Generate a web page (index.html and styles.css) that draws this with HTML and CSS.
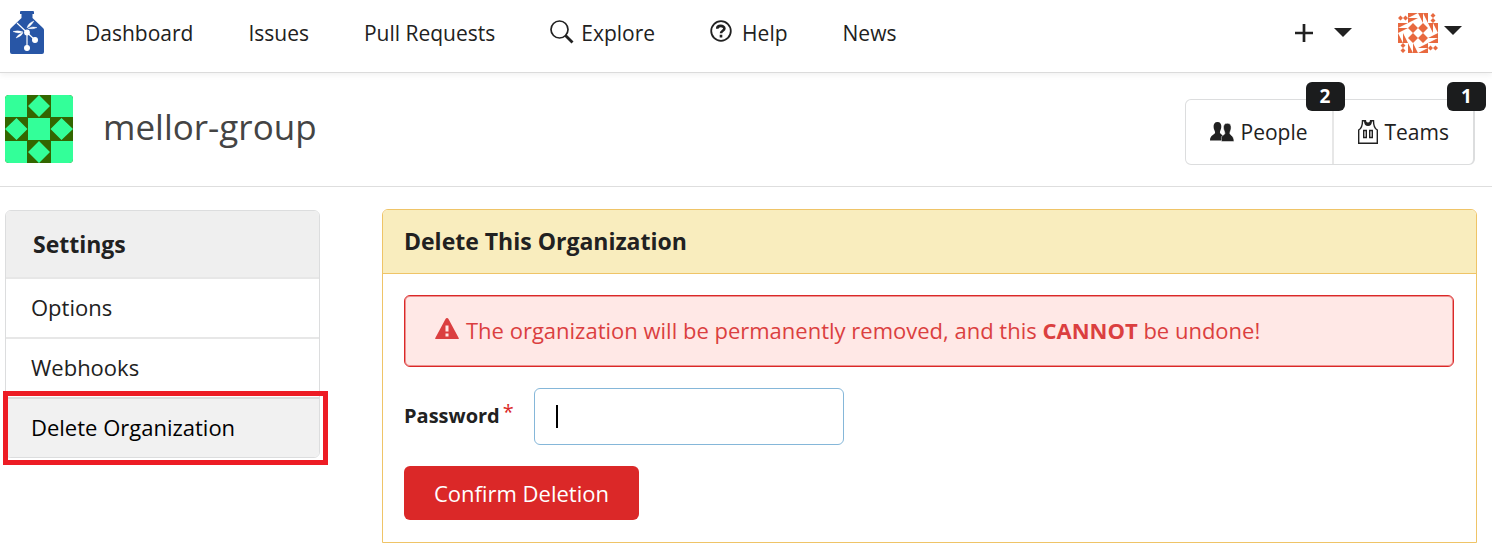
FILE: index.html
```html
<!DOCTYPE html>
<html lang="en">
<head>
<meta charset="utf-8">
<meta name="viewport" content="width=device-width, initial-scale=1">
<title>mellor-group - Delete Organization</title>
<link rel="stylesheet" href="styles.css">
</head>
<body>
<header class="navbar">
  <a class="logo" href="#" aria-label="Home">
    <svg width="34" height="43" viewBox="0 0 34 43">
      <path fill="#2856a6" d="M10 1Q10 0 11 0H23Q24 0 24 1V3H22.500V7L33 17Q34 18 34 19V41Q34 43 32 43H2Q0 43 0 41V19Q0 18 1 17L11.500 7V3H10Z"/>
      <g stroke="#fff" stroke-width="1.200" fill="#fff">
        <path fill="none" d="M7 12 17 21.500 25 29M17 21.500V37"/>
        <circle cx="17" cy="21.500" r="2.300"/><circle cx="25" cy="29" r="2.400"/><circle cx="17" cy="37" r="2.400"/>
        <path stroke-width=".4" d="M17 17Q18 12 24 10 22 13 20 15ZM18 17.500Q22 15 27 16.500 23 18.500 18 17.500ZM3 20.500Q8 19 13 21 8 23 3 20.500ZM13 21.500Q12 25 6 27 8 23 13 21.500Z"/>
      </g>
    </svg>
  </a>
  <nav class="menu">
    <a href="#">Dashboard</a>
    <a href="#">Issues</a>
    <a href="#">Pull Requests</a>
    <a class="with-icon" href="#">
      <svg width="24" height="26" viewBox="0 0 24 26" fill="none" stroke="#212121"><circle cx="9.500" cy="9.500" r="8.500" stroke-width="1.700"/><path stroke-width="2.800" d="m15.500 15.500 7 7"/></svg>
      Explore</a>
    <a class="with-icon help" href="#">
      <svg width="22" height="25" viewBox="0 0 22 25" fill="none" stroke="#212121"><circle cx="11" cy="11" r="9.800" stroke-width="1.800"/><path stroke-width="2.600" d="M7.200 8.700C7.200 5 14.400 5 14.400 8.600 14.400 10.800 11 10.800 11 13.300M11 14.800v2.600"/></svg>
      Help</a>
    <a href="#">News</a>
  </nav>
  <div class="actions">
    <button class="icon-button" type="button" aria-label="Create">
      <svg width="18" height="18" viewBox="0 0 18 18"><path fill="none" stroke="#212121" stroke-width="2.700" d="M9 0v18M0 9h18"/></svg>
      <svg class="caret" width="18" height="9" viewBox="0 0 18 9"><path fill="#212121" d="M0 0h18L9 9z"/></svg>
    </button>
    <button class="icon-button user" type="button" aria-label="Profile and settings">
      <svg width="40" height="40" viewBox="0 0 40 40" fill="#e8693f">
        <defs>
          <path id="quarter" d="M0 10h10L0 15zM0 15h10L0 20zM0 20v10h5zM5 20v10h5zM2.500 2.500 5 5 2.500 7.500 0 5zM7.500 2.500 10 5 7.500 7.500 5 5zM15 10l5 5-5 5-5-5z"/>
        </defs>
        <use href="#quarter"/><use href="#quarter" transform="rotate(90 20 20)"/><use href="#quarter" transform="rotate(180 20 20)"/><use href="#quarter" transform="rotate(270 20 20)"/>
      </svg>
      <svg class="caret" width="18" height="13" viewBox="0 0 18 13"><path fill="#212121" d="M0 0h18L9 9z"/></svg>
    </button>
  </div>
</header>

<section class="org-header">
  <svg class="org-avatar" width="68" height="68" viewBox="0 0 68 68" role="img" aria-label="mellor-group avatar">
    <path fill="#360" d="M0 0h68v68H0z"/>
    <path fill="#3f9" d="M0 0h22v22H0zM46 0h22v22H46zM0 46h22v22H0zM46 46h22v22H46zM23 23h22v22H23zM34 0l11 11-11 11-11-11zM34 46l11 11-11 11-11-11zM11.500 23l11 11-11 11L0 34zM56.500 23 68 34 56.500 45l-11-11z"/>
  </svg>
  <h1>mellor-group</h1>
  <div class="org-links">
    <a href="#">
      <svg width="24" height="20" viewBox="0 0 24 20" fill="#212121"><path d="M7.500 0C10.300 0 11.500 2 11.300 5 11.100 7.500 10 8.500 9.900 10.500 10.200 12.700 14.500 12.500 14.500 18.500H0C0 12.800 5 12.700 5.100 10.500 5 8.500 3.700 7.500 3.600 5 3.400 2 4.700 0 7.500 0Z"/><path stroke="#fff" stroke-width=".5" d="M17.300 1.300C20.200 1.300 21.300 3.300 21.100 6 21 8.400 19.900 9.300 19.800 11.300 20 13.500 24 13.400 24 19.500H11.500C11.500 16 11 15 12 14 13.200 13 14.800 12.600 14.900 11.300 14.800 9.300 13.700 8.400 13.500 6 13.300 3.300 14.500 1.300 17.300 1.300Z"/></svg>
      People <span class="badge">2</span></a>
    <a href="#">
      <svg width="20" height="24" viewBox="0 0 20 24" fill="none" stroke="#212121" stroke-width="1.400"><path d="M4.500.7Q4.500 8 .7 10V23.300H19.300V10Q15.500 8 15.500.7ZM5.700 10.500h2.600v7H5.700zM11.700 10.500h2.600v7h-2.600z"/><path fill="#212121" stroke="none" d="M6 1H14Q14 6 10 6T6 1Z"/><path fill="#fff" stroke="none" d="M8 0h4Q12 2.500 10 2.500T8 0Z"/></svg>
      Teams <span class="badge">1</span></a>
  </div>
</section>

<main class="content">
  <nav class="sidebar">
    <h2>Settings</h2>
    <a href="#">Options</a>
    <a href="#">Webhooks</a>
    <a class="active" href="#" aria-current="page">Delete Organization</a>
  </nav>
  <section class="panel">
    <h2>Delete This Organization</h2>
    <form class="panel-body">
      <p class="alert">
        <svg width="24" height="24" viewBox="0 0 24 24"><path fill="#db3f40" d="M12 0Q13 0 13.500 1L23.700 20Q24.200 21 23 21H1Q-.2 21 .3 20L10.500 1Q11 0 12 0Z"/><path fill="#ffe8e6" d="M10.500 7.500h3v6h-3zM10.500 15.500h3v3h-3z"/></svg>
        <span>The organization will be permanently removed, and this <strong>CANNOT</strong> be undone!</span>
      </p>
      <div class="field">
        <label for="password">Password<span class="required">*</span></label>
        <input id="password" type="password" required>
      </div>
      <button class="danger" type="button">Confirm Deletion</button>
    </form>
  </section>
</main>
</body>
</html>
```
FILE: styles.css
```css
* { box-sizing: border-box; }

body {
  margin: 0;
  background: #fff;
  color: #212121;
  font: 22px/30px "Open Sans", "Noto Sans", sans-serif;
}

a { color: inherit; text-decoration: none; }
svg { flex: none; display: block; }
h1, h2, p { margin: 0; }
button, input { font: inherit; }

.navbar {
  display: flex;
  align-items: center;
  height: 73px;
  padding: 0 30px 7px 10px;
  border-bottom: 1px solid #dbdbdb;
  box-shadow: 0 2px 6px rgba(0, 0, 0, .06);
}
.menu { display: flex; align-items: center; gap: 55px; margin-left: 41px; font-size: 21px; white-space: nowrap; }
.with-icon { display: flex; align-items: center; gap: 7px; }
.help { gap: 10px; }
.actions { display: flex; align-items: center; gap: 46px; margin-left: auto; }
.icon-button { display: flex; align-items: center; gap: 21px; padding: 0; border: 0; background: none; }
.user { gap: 6px; }

.org-header {
  display: flex;
  align-items: center;
  height: 114px;
  padding: 0 17px 2px 5px;
  border-bottom: 1px solid #dedede;
}
.org-avatar { border-radius: 4px; }
.org-header h1 { margin: 0 0 4px 30px; color: #444; font-size: 35px; font-weight: 400; line-height: 48px; }
.org-links {
  display: flex;
  height: 66px;
  margin: 6px 0 0 auto;
  border: 1px solid #dcddde;
  border-right-width: 2px;
  border-radius: 6px;
  font-size: 21px;
}
.org-links a { position: relative; display: flex; align-items: center; gap: 7px; padding: 0 24px; }
.org-links a + a { border-left: 2px solid #e7e7e7; }
.badge {
  position: absolute;
  z-index: 1;
  top: -18px;
  right: -13px;
  width: 39px;
  border-radius: 6px;
  background: #1b1c1d;
  color: #fff;
  font-size: 19px;
  font-weight: 700;
  line-height: 29px;
  text-align: center;
}

.content {
  display: grid;
  grid-template-columns: 315px minmax(0, 1fr);
  gap: 62px;
  align-items: start;
  padding: 22px 15px 10px 5px;
}
.sidebar { margin-top: 1px; border: 1px solid #dcddde; border-radius: 6px; }
.sidebar h2 {
  padding: 18px 27px;
  border-radius: 5px 5px 0 0;
  background: #efefef;
  font-size: 23px;
  line-height: 30px;
}
.sidebar a { position: relative; display: block; padding: 13px 25px 15px; border-top: 2px solid #e7e7e7; }
.sidebar .active { border-color: #dcdcdc; border-radius: 0 0 5px 5px; background: #f1f1f1; color: #000; }
.sidebar .active::after {
  content: "";
  position: absolute;
  inset: -8px -9px -8px -3px;
  border: 5px solid #ed1c24;
}

.panel { border: 1px solid #efc467; border-radius: 6px 6px 0 0; }
.panel h2 {
  padding: 15px 21px 16px;
  border-bottom: 1px solid #efc467;
  border-radius: 5px 5px 0 0;
  background: #f9edbe;
  font-size: 23px;
  line-height: 32px;
}
.panel-body { display: grid; gap: 21px; justify-items: start; padding: 21px 22px 22px 21px; }
.alert {
  display: flex;
  align-items: center;
  gap: 7px;
  width: 100%;
  padding: 19px 30px 21px;
  border: 1px solid #db2828;
  border-radius: 6px;
  box-shadow: inset 0 0 0 1px #ed9290;
  background: #ffe8e6;
  color: #db3f40;
  line-height: 30px;
}
.field { display: flex; align-items: center; gap: 20px; }
.field label { padding-bottom: 2px; font-size: 20px; font-weight: 700; }
.required { margin-left: 3px; color: #db2828; font-weight: 400; vertical-align: 4px; line-height: 1; }
.field input {
  width: 310px;
  height: 57px;
  padding: 0 21px;
  border: 1px solid #85b7d9;
  border-radius: 6px;
  outline: 0;
  background: linear-gradient(#000, #000) 21px center / 2px 23px no-repeat #fff;
}
.danger {
  padding: 12px 30px;
  border: 0;
  border-radius: 6px;
  background: #db2828;
  color: #fff;
}
```
